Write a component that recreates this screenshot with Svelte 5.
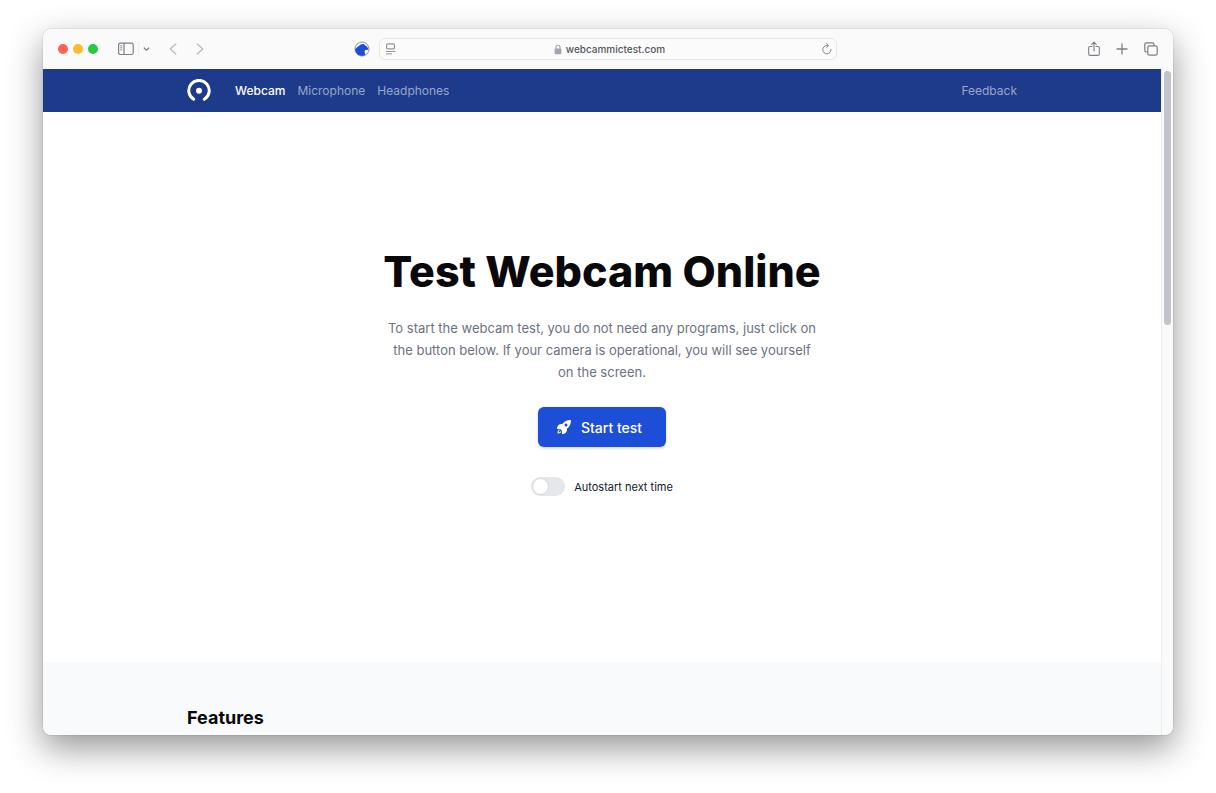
<script>
  let autostart = $state(false);
  const links = [
    { label: 'Webcam', href: '#webcam', active: true },
    { label: 'Microphone', href: '#microphone', active: false },
    { label: 'Headphones', href: '#headphones', active: false },
  ];
</script>

<div class="desktop">
  <div class="window">
    <div class="toolbar">
      <div class="tools">
        <div class="lights">
          <button class="light red" aria-label="Close"></button>
          <button class="light amber" aria-label="Minimize"></button>
          <button class="light green" aria-label="Zoom"></button>
        </div>
        <button class="tool sidebar" aria-label="Sidebar">
          <svg width="16" height="14" viewBox="0 0 16 14" fill="none" stroke="currentColor">
            <rect x="0.6" y="1.1" width="14.6" height="11.4" rx="1.8" stroke-width="1.2" />
            <path d="M6 1v11.5" stroke-width="1.2" />
            <path d="M2.2 3.8h2M2.2 5.8h2M2.2 7.8h2" stroke-width="0.9" />
          </svg>
        </button>
        <span class="divider"></span>
        <button class="tool" aria-label="Tab groups">
          <svg width="7" height="6" viewBox="0 0 7 6" fill="none" stroke="currentColor" stroke-width="1.2" stroke-linecap="round" stroke-linejoin="round">
            <path d="M1.2 2 3.5 4.2 5.8 2" />
          </svg>
        </button>
        <button class="tool pale back" aria-label="Back">
          <svg width="8" height="12" viewBox="0 0 8 12" fill="none" stroke="currentColor" stroke-width="1.3" stroke-linecap="round" stroke-linejoin="round">
            <path d="M6.8 1 1.2 6l5.6 5" />
          </svg>
        </button>
        <button class="tool pale forward" aria-label="Forward">
          <svg width="8" height="12" viewBox="0 0 8 12" fill="none" stroke="currentColor" stroke-width="1.3" stroke-linecap="round" stroke-linejoin="round">
            <path d="M1.2 1 6.8 6l-5.6 5" />
          </svg>
        </button>
        <button class="tool extension" aria-label="Extension">
          <svg width="16" height="16" viewBox="0 0 16 16">
            <circle cx="8" cy="8" r="7" fill="#fff" stroke="#7d8cb8" stroke-width="1" />
            <path d="M1 8.500 3 6.300 5.500 4.500 7 3.200 9.800 3 11 4.300 13 5.600 14.300 8 13.500 9 11.300 9 10.500 10.200 11.300 14 8 15 4.500 14 2 11.500Z" fill="#1d4ed8" />
          </svg>
        </button>
      </div>

      <div class="address">
        <svg width="12" height="12" viewBox="0 0 12 12" fill="none" stroke="#96989f">
          <rect x="1.600" y="0.900" width="7.800" height="5" rx="1" stroke-width="1.200" />
          <path d="M1 8.500h9.500M1 10.900h6" stroke-width="1" />
        </svg>
        <div class="site">
          <svg width="8" height="11" viewBox="0 0 8 11">
            <path d="M2 5V3.200a2 2 0 0 1 4 0V5" fill="none" stroke="#a3a5ad" stroke-width="1.100" />
            <rect x="0.600" y="4.600" width="6.800" height="5.600" rx="1" fill="#a3a5ad" />
          </svg>
          <span>webcammictest.com</span>
        </div>
        <button class="tool reload" aria-label="Reload">
          <svg width="10" height="12" viewBox="0 0 10 12" fill="none" stroke="currentColor" stroke-width="1" stroke-linecap="round" stroke-linejoin="round">
            <path d="M9 6.400A4.100 4.100 0 1 1 4.900 2.600h1.300M4.600.800l1.900 1.800-1.900 1.900" />
          </svg>
        </button>
      </div>

      <div class="tools right">
        <button class="tool" aria-label="Share">
          <svg width="12" height="16" viewBox="0 0 12 16" fill="none" stroke="currentColor" stroke-width="1.100" stroke-linecap="round" stroke-linejoin="round">
            <path d="M4 5.500H2A1.300 1.300 0 0 0 .700 6.800v6.200A1.400 1.400 0 0 0 2.100 14.400h7.800a1.400 1.400 0 0 0 1.400-1.400V6.800A1.300 1.300 0 0 0 10 5.500H8M6 10V1.200M3.800 3.300 6 1.100l2.200 2.200" />
          </svg>
        </button>
        <button class="tool" aria-label="New tab">
          <svg width="12" height="12" viewBox="0 0 12 12" fill="none" stroke="currentColor" stroke-width="1.300" stroke-linecap="round">
            <path d="M6 1v10M1 6h10" />
          </svg>
        </button>
        <button class="tool" aria-label="Tab overview">
          <svg width="14" height="14" viewBox="0 0 14 14" fill="none" stroke="currentColor" stroke-width="1.200" stroke-linejoin="round">
            <rect x="3.800" y="3.800" width="9.400" height="9.400" rx="1.600" />
            <path d="M3.800 10H2.400A1.600 1.600 0 0 1 .800 8.400v-6A1.600 1.600 0 0 1 2.400.800h6A1.600 1.600 0 0 1 10 2.400v1.400" />
          </svg>
        </button>
      </div>
    </div>

    <div class="viewport">
      <div class="page">
        <header class="navbar">
          <nav class="container nav">
            <a class="logo" href="#home" aria-label="Home">
              <svg width="24" height="24" viewBox="0 0 24 24" fill="none">
                <path d="M6.700 20.300A10.200 10.200 0 1 1 17.300 20.300" stroke="#fff" stroke-width="3" stroke-linecap="round" />
                <circle cx="12" cy="11.800" r="3" fill="#fff" />
              </svg>
            </a>
            {#each links as link}
              <a class="link" class:active={link.active} href={link.href}>{link.label}</a>
            {/each}
            <a class="link feedback" href="#feedback">Feedback</a>
          </nav>
        </header>

        <main class="hero">
          <h1>Test Webcam Online</h1>
          <p>
            To start the webcam test, you do not need any programs, just click on the button below.
            If your camera is operational, you will see yourself on the screen.
          </p>
          <button class="start">
            <svg width="16" height="16" viewBox="0 0 24 24" fill="currentColor">
              <path fill-rule="evenodd" d="M9.315 7.584C12.195 3.883 16.695 1.500 21.750 1.500a.750.750 0 0 1 .750.750c0 5.056-2.383 9.555-6.084 12.436A6.750 6.750 0 0 1 9.750 22.500a.750.750 0 0 1-.750-.750v-4.131A15.838 15.838 0 0 1 6.382 15H2.250a.750.750 0 0 1-.750-.750 6.750 6.750 0 0 1 7.815-6.666ZM15 6.750a2.250 2.250 0 1 0 0 4.500 2.250 2.250 0 0 0 0-4.500Z" />
              <path d="M5.260 17.242a.750.750 0 1 0-.897-1.203 5.243 5.243 0 0 0-2.050 5.022.750.750 0 0 0 .625.627 5.243 5.243 0 0 0 5.022-2.051.750.750 0 1 0-1.202-.897 3.744 3.744 0 0 1-3.008 1.510c0-1.230.592-2.323 1.510-3.008Z" />
            </svg>
            Start test
          </button>
          <label class="autostart">
            <input type="checkbox" bind:checked={autostart} />
            <span>Autostart next time</span>
          </label>
        </main>

        <section class="features">
          <div class="container">
            <h2>Features</h2>
          </div>
        </section>
      </div>
      <div class="scrollbar"><div class="thumb"></div></div>
    </div>
  </div>
</div>

<style>
  :global(body) {
    margin: 0;
    background: #fff;
  }

  .desktop {
    box-sizing: border-box;
    min-height: 100vh;
    padding: 29px 43px 58px;
    display: flex;
    flex-direction: column;
    overflow: hidden;
    font-family: Inter, 'Liberation Sans', sans-serif;
  }

  .window {
    flex: 1;
    display: flex;
    flex-direction: column;
    border-radius: 8px;
    overflow: hidden;
    background: #fff;
    box-shadow:
      0 0 1px rgba(0, 0, 0, 0.55),
      0 13px 34px rgba(0, 0, 0, 0.42);
  }

  button {
    font: inherit;
    border: 0;
    padding: 0;
    cursor: pointer;
  }

  svg {
    display: block;
    flex: none;
  }

  .toolbar {
    display: grid;
    grid-template-columns: 1fr minmax(0, 458px) 1fr;
    align-items: center;
    height: 40px;
    background: #fafafa;
  }

  .tools {
    display: flex;
    align-items: center;
    padding: 0 15px;
  }

  .tools.right {
    justify-content: flex-end;
    gap: 16px;
  }

  .lights {
    display: flex;
    gap: 5px;
  }

  .light {
    width: 10px;
    height: 10px;
    border-radius: 50%;
  }

  .red { background: #ff5f57; }
  .amber { background: #febc2e; }
  .green { background: #28c840; }

  .tool {
    display: flex;
    background: none;
    color: #7d7f88;
  }

  .pale { color: #b8b9bf; }
  .sidebar { margin-left: 20px; }
  .back { margin-left: 19px; }
  .forward { margin-left: 19px; }

  .extension {
    margin-left: auto;
    margin-right: -6px;
  }

  .divider {
    width: 1px;
    height: 14px;
    margin: 0 4px;
    background: #f0f0f0;
  }

  .address {
    box-sizing: border-box;
    height: 22px;
    padding: 0 4px 0 5px;
    display: flex;
    align-items: center;
    justify-content: space-between;
    border: 1px solid #e6e6e6;
    border-radius: 6px;
    background: #fbfbfb;
  }

  .site {
    display: flex;
    align-items: center;
    gap: 4px;
    font-size: 10px;
    font-weight: 500;
    color: #555761;
  }

  .tool.reload { color: #85878f; }

  .viewport {
    flex: 1;
    display: flex;
  }

  .page {
    flex: 1;
    display: flex;
    flex-direction: column;
  }

  .container {
    box-sizing: border-box;
    max-width: 860px;
    margin: 0 auto;
    padding: 0 15px;
  }

  .navbar {
    background: #1e3a8a;
  }

  .nav {
    display: flex;
    align-items: center;
    gap: 12px;
    height: 43px;
    font-size: 12px;
  }

  .logo { margin-right: 12px; }

  .link {
    color: #9aa6cb;
    text-decoration: none;
  }

  .link.active {
    color: #fff;
    font-weight: 500;
  }

  .feedback { margin-left: auto; }

  .hero {
    display: flex;
    flex-direction: column;
    align-items: center;
    padding: 132px 24px 166px;
    text-align: center;
  }

  h1 {
    margin: 0;
    font-size: 43px;
    line-height: 54px;
    font-weight: 800;
    color: #09090b;
  }

  p {
    max-width: 433px;
    margin: 19px 0 24px;
    font-size: 13px;
    line-height: 22px;
    color: #6b7280;
  }

  .start {
    display: flex;
    align-items: center;
    gap: 9px;
    height: 40px;
    padding: 0 24px 0 18px;
    border-radius: 6px;
    background: #1d4ed8;
    color: #fff;
    font-size: 14px;
    font-weight: 500;
    box-shadow: 0 1px 3px rgba(0, 0, 0, 0.2);
  }

  .autostart {
    display: flex;
    align-items: center;
    gap: 9px;
    margin-top: 30px;
    font-size: 11px;
    color: #111827;
  }

  .autostart input {
    appearance: none;
    display: flex;
    box-sizing: border-box;
    width: 34px;
    height: 19px;
    margin: 0;
    padding: 1px;
    border-radius: 10px;
    background: #e5e7eb;
    cursor: pointer;
  }

  .autostart input::before {
    content: '';
    box-sizing: border-box;
    width: 17px;
    height: 17px;
    border: 1px solid #d1d5db;
    border-radius: 50%;
    background: #fff;
  }

  .autostart input:checked {
    justify-content: flex-end;
    background: #1d4ed8;
  }

  .features {
    flex: 1;
    padding-top: 44px;
    background: #f9fafb;
  }

  h2 {
    margin: 0;
    font-size: 18px;
    line-height: 24px;
    font-weight: 700;
    color: #09090b;
  }

  .scrollbar {
    box-sizing: border-box;
    width: 12px;
    padding: 2px;
    border-left: 1px solid #ededed;
    background: #fafafb;
  }

  .thumb {
    height: 254px;
    width: 7px;
    border-radius: 4px;
    background: #c2c4cb;
  }
</style>
